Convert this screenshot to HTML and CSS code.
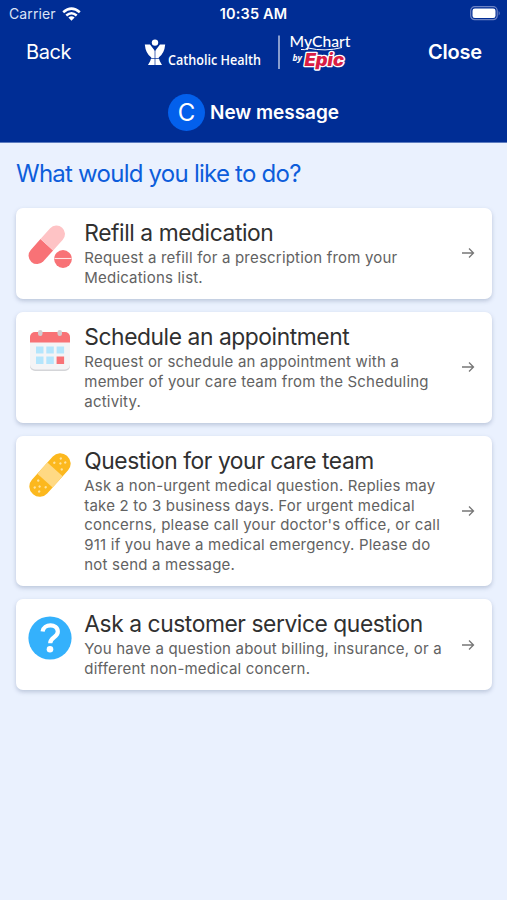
FILE: index.html
```html
<!DOCTYPE html>
<html lang="en">
<head>
<meta charset="utf-8">
<title>New message</title>
<link rel="stylesheet" href="styles.css">
</head>
<body>
<header class="header">
  <div class="status">
    <div class="carrier"><span>Carrier</span>
      <svg width="19" height="14" viewBox="0 0 19 14" fill="none" stroke="#fff" stroke-width="2.5"><path d="M1.2 5.3Q9.5-2 17.8 5.3M4.3 8.5q5.2-4.5 10.4 0"/><path d="M6.4 10.6q3.1-2.6 6.2 0L9.5 13.8z" fill="#fff" stroke="none"/></svg>
    </div>
    <span class="time">10:35 AM</span>
    <svg class="battery" width="31" height="15" viewBox="0 0 31 15"><rect x=".7" y=".7" width="26.5" height="13" rx="4" fill="none" stroke="#6d83c4" stroke-width="1.2"/><rect x="2.5" y="2.5" width="23" height="9.5" rx="2.3" fill="#fff"/><path d="M28.7 5q2 2.2 0 4.6z" fill="#6d83c4"/></svg>
  </div>
  <nav class="nav">
    <span class="back">Back</span>
    <svg class="logo" width="210" height="44" viewBox="143 31 210 44">
      <g fill="#fff">
        <circle cx="155" cy="42.600" r="3.200"/>
        <path d="M144.800 44.500h5.200l5 6.500 5-6.500h5.200q-.8 9-6.500 13 .6 3.700 3.300 7.500h-14q2.700-3.800 3.300-7.500-5.700-4-6.500-13z"/>
      </g>
      <path d="M155 50v15M150 58.500h10" stroke="#002d95" stroke-width=".7"/>
      <text class="catholic" x="168" y="65" textLength="93" lengthAdjust="spacingAndGlyphs">Catholic Health</text>
      <path d="M279 35.500v33.500" stroke="#d2daef" stroke-width="1.300"/>
      <text class="mychart" x="289.500" y="46.800" textLength="61" lengthAdjust="spacingAndGlyphs">MyChart</text>
      <path d="M301 49.500q4 1 7-1.500 17 4 34-.5" fill="none" stroke="#fff" stroke-width="1"/>
      <text class="by" x="292.500" y="61" textLength="9.500" lengthAdjust="spacingAndGlyphs">by</text>
      <text class="epic" x="304.500" y="65.800" textLength="39.500" lengthAdjust="spacingAndGlyphs">Epic</text>
    </svg>
    <span class="close">Close</span>
  </nav>
  <div class="title"><span class="avatar">C</span><h1>New message</h1></div>
</header>
<main class="main">
  <h2>What would you like to do?</h2>
  <div class="list">
    <article class="card">
      <svg class="icon" viewBox="0 0 44 44"><g transform="rotate(-48 19 20)"><path d="M19 11.200H4.500a8.500 8.500 0 0 0 0 17H19z" fill="#f87276"/><path d="M19 11.200h14.500a8.500 8.500 0 0 1 0 17H19z" fill="#fec3c5"/></g><circle cx="35" cy="34" r="8.900" fill="#f87276"/><path d="M26.500 33.500h17" stroke="#ffe2e2" stroke-width="1.100"/></svg>
      <div class="copy"><h3>Refill a medication</h3><p>Request a refill for a prescription from your<br>Medications list.</p></div>
      <svg class="arrow" viewBox="0 0 14 12"><path d="M1 6h11.500M8 1.500 12.500 6 8 10.500"/></svg>
    </article>
    <article class="card">
      <svg class="icon" viewBox="0 0 44 44"><rect x="2" y="4" width="40" height="38" rx="5" fill="#d4d5d8"/><path d="M2 12h40v23.500a5 5 0 0 1-5 5H7a5 5 0 0 1-5-5z" fill="#f4f4f6"/><path d="M2 13.500V8a5 5 0 0 1 5-5h30a5 5 0 0 1 5 5v5.500z" fill="#f87276"/><g fill="#d0cfd3"><rect x="10" y="1" width="4.500" height="6" rx="2.200"/><rect x="29.500" y="1" width="4.500" height="6" rx="2.200"/></g><g fill="#b4e5fc"><path d="M8 17.500h7.500v7H8zM18.300 17.500h7.500v7h-7.500zM28.600 17.500h7.500v7h-7.500zM8 27.500h7.500V35H8zM18.300 27.500h7.500V35h-7.500z"/></g><path d="M28.600 27.500h7.500V35h-7.500z" fill="#f87276"/></svg>
      <div class="copy"><h3>Schedule an appointment</h3><p>Request or schedule an appointment with a<br>member of your care team from the Scheduling<br>activity.</p></div>
      <svg class="arrow" viewBox="0 0 14 12"><path d="M1 6h11.500M8 1.500 12.500 6 8 10.500"/></svg>
    </article>
    <article class="card">
      <svg class="icon" viewBox="0 0 44 44"><g transform="rotate(-48 22 22)"><rect x="-3.600" y="11.700" width="51.200" height="20.600" rx="10" fill="#fcb81e"/><path d="M14.500 11.700h15v20.600h-15z" fill="#ffd983"/><g fill="#ffe29c"><circle cx="2.500" cy="19" r="1.200"/><circle cx="2.500" cy="25" r="1.200"/><circle cx="6.500" cy="22" r="1.200"/><circle cx="10" cy="17" r="1.200"/><circle cx="10" cy="27" r="1.200"/><circle cx="34" cy="17" r="1.200"/><circle cx="34" cy="27" r="1.200"/><circle cx="37.500" cy="22" r="1.200"/><circle cx="41.500" cy="19" r="1.200"/><circle cx="41.500" cy="25" r="1.200"/></g></g></svg>
      <div class="copy"><h3>Question for your care team</h3><p>Ask a non-urgent medical question. Replies may<br>take 2 to 3 business days. For urgent medical<br>concerns, please call your doctor's office, or call<br>911 if you have a medical emergency. Please do<br>not send a message.</p></div>
      <svg class="arrow" viewBox="0 0 14 12"><path d="M1 6h11.500M8 1.500 12.500 6 8 10.500"/></svg>
    </article>
    <article class="card">
      <svg class="icon" viewBox="0 0 44 44"><circle cx="22" cy="22" r="21.600" fill="#34b1fc"/><path d="M14.600 15.500c.8-8 15.200-8.500 15.200.3 0 5.700-7.600 5.200-7.600 11.400" fill="none" stroke="#fff" stroke-width="4.200"/><circle cx="22" cy="33.300" r="3.300" fill="#fff"/></svg>
      <div class="copy"><h3>Ask a customer service question</h3><p>You have a question about billing, insurance, or a<br>different non-medical concern.</p></div>
      <svg class="arrow" viewBox="0 0 14 12"><path d="M1 6h11.500M8 1.500 12.500 6 8 10.500"/></svg>
    </article>
  </div>
</main>
</body>
</html>
```
FILE: styles.css
```css
* { box-sizing: border-box; }
body { margin: 0; min-height: 900px; background: #eaf1fe; font-family: Inter, "Liberation Sans", sans-serif; }
h1, h2, h3, p { margin: 0; font-weight: 400; white-space: nowrap; }
svg { display: block; flex: none; }
.header { height: 143px; background: #002d95; border-bottom: 1px solid #5d7cc0; color: #fff; }
.status { height: 27px; display: grid; grid-template-columns: 1fr auto 1fr; align-items: center; padding: 0 6px; }
.carrier { display: flex; align-items: center; gap: 6px; padding-left: 3px; font-size: 14px; letter-spacing: .1px; color: #dbe3f5; }
.time { font-size: 14.500px; font-weight: 600; letter-spacing: .15px; }
.battery { justify-self: end; }
.nav { height: 50px; display: grid; grid-template-columns: 117px 210px 1fr; align-items: center; padding: 0 25px 0 26px; }
.logo { margin-top: 2px; }
.back { font-size: 20px; letter-spacing: -.4px; }
.close { justify-self: end; font-size: 20px; font-weight: 600; letter-spacing: -.2px; }
.catholic { font: 600 13.500px "Open Sans", sans-serif; fill: #fff; }
.mychart { font: 500 16px Lato, sans-serif; fill: #fff; }
.by { font: italic 700 8.500px "Open Sans", sans-serif; fill: #fff; }
.epic { font: italic 900 17px Inter, sans-serif; fill: #d91d45; stroke: #fff; stroke-width: 2.600px; paint-order: stroke; stroke-linejoin: round; }
.title { height: 70px; display: flex; align-items: center; justify-content: center; gap: 5px; }
.avatar { width: 37px; height: 37px; border-radius: 50%; background: #0360ec; display: grid; place-items: center; font-size: 24px; }
.title h1 { font-size: 19px; font-weight: 600; letter-spacing: -.05px; }
.main { padding: 15px 15px 0 16px; }
.main h2 { height: 32px; line-height: 32px; font-size: 24px; letter-spacing: -.76px; color: #0d5ddb; }
.list { display: flex; flex-direction: column; gap: 12.600px; margin-top: 17.500px; }
.card { display: flex; padding: 10px 17px 11.900px 12px; background: #fff; border-radius: 7px; box-shadow: 0 2px 4px rgba(65, 85, 125, .28); }
.icon { width: 44px; height: 44px; margin-top: 7px; }
.copy { flex: 1; margin-left: 12.300px; }
.copy h3 { font-size: 22.800px; line-height: 29px; letter-spacing: -.43px; color: #303030; }
.copy p { margin-top: 1.600px; font-size: 15px; line-height: 19.600px; letter-spacing: .2px; color: #626262; }
.arrow { width: 14px; height: 12px; align-self: center; position: relative; top: 1px; fill: none; stroke: #777; stroke-width: 1.300; }
```
